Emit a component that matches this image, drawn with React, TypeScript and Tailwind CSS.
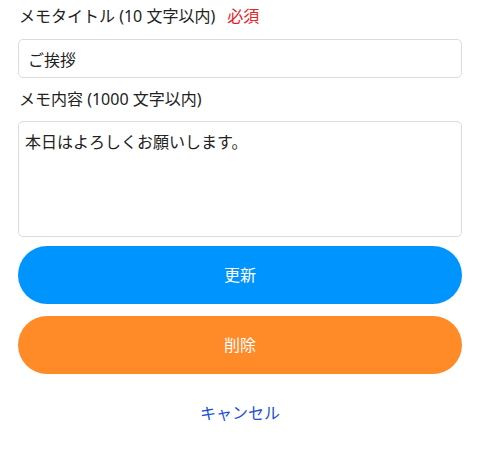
export default function App() {
  return (
    <div
      className="flex flex-col bg-white px-[18px] pt-[4px] text-[16px] text-[#222]"
      style={{ fontFamily: '"Noto Sans", "Noto Sans CJK JP", sans-serif' }}
    >
      {/* Title field */}
      <div className="flex h-[24px] items-center pl-[1px] leading-[24px]">
        <span>メモタイトル (10 文字以内)</span>
        <span className="ml-[12px] text-[#e3242b]">必須</span>
      </div>
      <input
        className="mt-[11px] h-[39px] w-full rounded-[5px] border border-[#dcdcdc] pl-[9px] text-[16px] outline-none"
        defaultValue="ご挨拶"
      />

      {/* Body field */}
      <div className="mt-[9px] h-[24px] pl-[1px] leading-[24px]">メモ内容 (1000 文字以内)</div>
      <textarea
        className="mt-[10px] h-[116px] w-full resize-none rounded-[5px] border border-[#dcdcdc] px-[6px] pt-[8px] text-[16px] leading-[24px] outline-none"
        defaultValue="本日はよろしくお願いします。"
      />

      {/* Buttons */}
      <button className="mt-[9px] h-[58px] w-full rounded-full bg-[#0094ff] text-[16px] text-white">
        更新
      </button>
      <button className="mt-[12px] h-[58px] w-full rounded-full bg-[#ff8a28] text-[16px] text-white">
        削除
      </button>
      <button className="mt-[27px] h-[24px] w-full text-center text-[16px] leading-[24px] text-[#1a4fd6]">
        キャンセル
      </button>
    </div>
  )
}
